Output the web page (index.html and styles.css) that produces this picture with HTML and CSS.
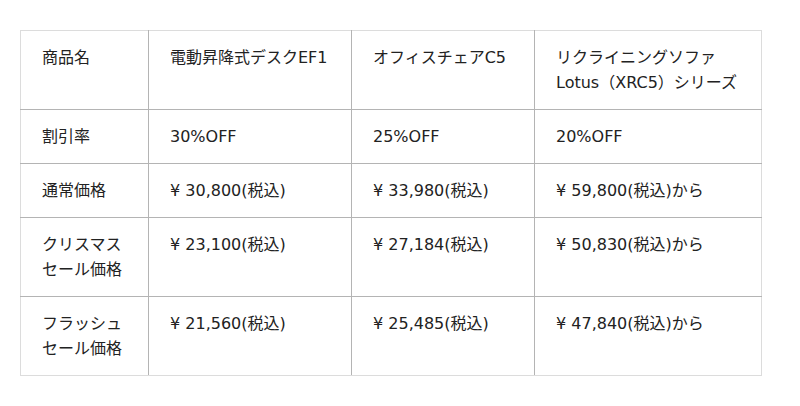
FILE: index.html
```html
<!DOCTYPE html>
<html lang="ja">
<head>
<meta charset="utf-8">
<link rel="stylesheet" href="styles.css">
</head>
<body>
<div class="wrap">
<table class="cmp">
<colgroup>
<col class="c1"><col class="c2"><col class="c3"><col class="c4">
</colgroup>
<tr class="tall">
<td>商品名</td>
<td>電動昇降式デスクEF1</td>
<td>オフィスチェアC5</td>
<td>リクライニングソファ<br>Lotus（XRC5）シリーズ</td>
</tr>
<tr>
<td>割引率</td>
<td>30%OFF</td>
<td>25%OFF</td>
<td>20%OFF</td>
</tr>
<tr>
<td>通常価格</td>
<td>¥ 30,800(税込)</td>
<td>¥ 33,980(税込)</td>
<td>¥ 59,800(税込)から</td>
</tr>
<tr class="tall">
<td>クリスマス<br>セール価格</td>
<td>¥ 23,100(税込)</td>
<td>¥ 27,184(税込)</td>
<td>¥ 50,830(税込)から</td>
</tr>
<tr class="tall">
<td>フラッシュ<br>セール価格</td>
<td>¥ 21,560(税込)</td>
<td>¥ 25,485(税込)</td>
<td>¥ 47,840(税込)から</td>
</tr>
</table>
</div>
</body>
</html>
```

FILE: styles.css
```css
html, body {
  margin: 0;
  padding: 0;
  background: #fff;
}
.wrap {
  padding: 30px 20px 0 20px;
}
.cmp {
  border-collapse: collapse;
  table-layout: fixed;
  width: 741px;
  font-family: "DejaVu Sans", "Noto Sans CJK JP", sans-serif;
  font-size: 16px;
  line-height: 25px;
  color: #222;
}
.c1 { width: 128px; }
.c2 { width: 203px; }
.c3 { width: 183px; }
.c4 { width: 227px; }
.cmp td {
  border: 1px solid #b4b4b4;
  padding: 14px 21px 14px 21px;
  vertical-align: top;
  height: 25px;
}
.cmp tr:first-child td { border-top-color: #dcdcdc; }
.cmp tr:last-child td { border-bottom-color: #dcdcdc; }
.cmp td:first-child { border-left-color: #dcdcdc; }
.cmp td:last-child { border-right-color: #dcdcdc; }
```
